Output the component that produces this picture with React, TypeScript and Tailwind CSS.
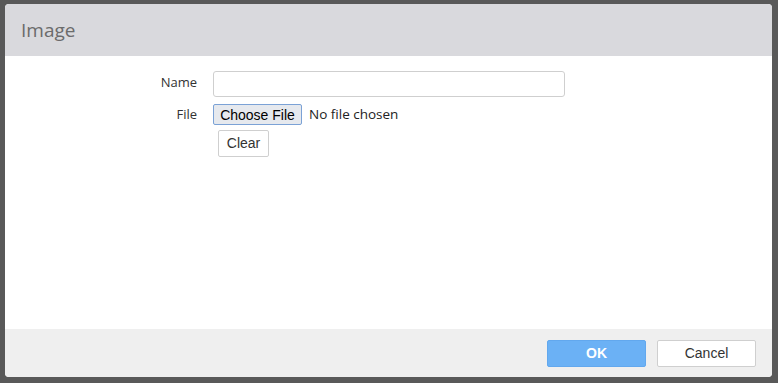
import React from "react";

export default function App() {
  return (
    <div className="w-[778px] h-[383px] bg-[#595959] pt-[4px] pl-[5px]">
      <div className="w-[767px] h-[373px] flex flex-col rounded-[4px] overflow-hidden bg-white">
        <div className="h-[52px] shrink-0 bg-[#d9d9dd] flex items-center px-[16px]">
          <span className="text-[19px] text-[#6b6b6b] font-['Open_Sans',sans-serif] leading-none mt-[1px]">Image</span>
        </div>
        <div className="flex-1 bg-white pt-[15px] font-['Open_Sans',sans-serif] text-[13px] text-[#333]">
          <div className="flex items-start h-[26px]">
            <label className="w-[192px] text-right leading-[20px] pt-[1px]">Name</label>
            <input
              type="text"
              className="ml-[16px] w-[352px] h-[26px] border border-[#cfcfcf] rounded-[3px] outline-none px-2"
            />
          </div>
          <div className="flex items-center mt-[7px] h-[21px]">
            <label className="w-[192px] text-right">File</label>
            <div className="ml-[16px] flex items-center">
              <button className="h-[21px] w-[89px] bg-[#e6e9ee] border border-[#7ba2d6] rounded-[2px] font-['Liberation_Sans',Arial,sans-serif] text-[14px] text-black leading-none">
                Choose File
              </button>
              <span className="ml-[7px] text-[13.5px] text-[#222]">No file chosen</span>
            </div>
          </div>
          <div className="mt-[5px] pl-[213px]">
            <button className="h-[27px] w-[51px] bg-white border border-[#cfcfcf] rounded-[2px] font-['Liberation_Sans',Arial,sans-serif] text-[14px] text-[#333]">
              Clear
            </button>
          </div>
        </div>
        <div className="h-[48px] shrink-0 bg-[#efefef] flex items-center justify-end pr-[16px] gap-[11px]">
          <button className="h-[27px] w-[99px] bg-[#6bb1f5] border border-[#62a8ee] rounded-[2px] font-['Liberation_Sans',Arial,sans-serif] text-[14px] font-bold text-white">
            OK
          </button>
          <button className="h-[27px] w-[99px] bg-white border border-[#cfcfcf] rounded-[2px] font-['Liberation_Sans',Arial,sans-serif] text-[14px] text-[#333]">
            Cancel
          </button>
        </div>
      </div>
    </div>
  );
}
